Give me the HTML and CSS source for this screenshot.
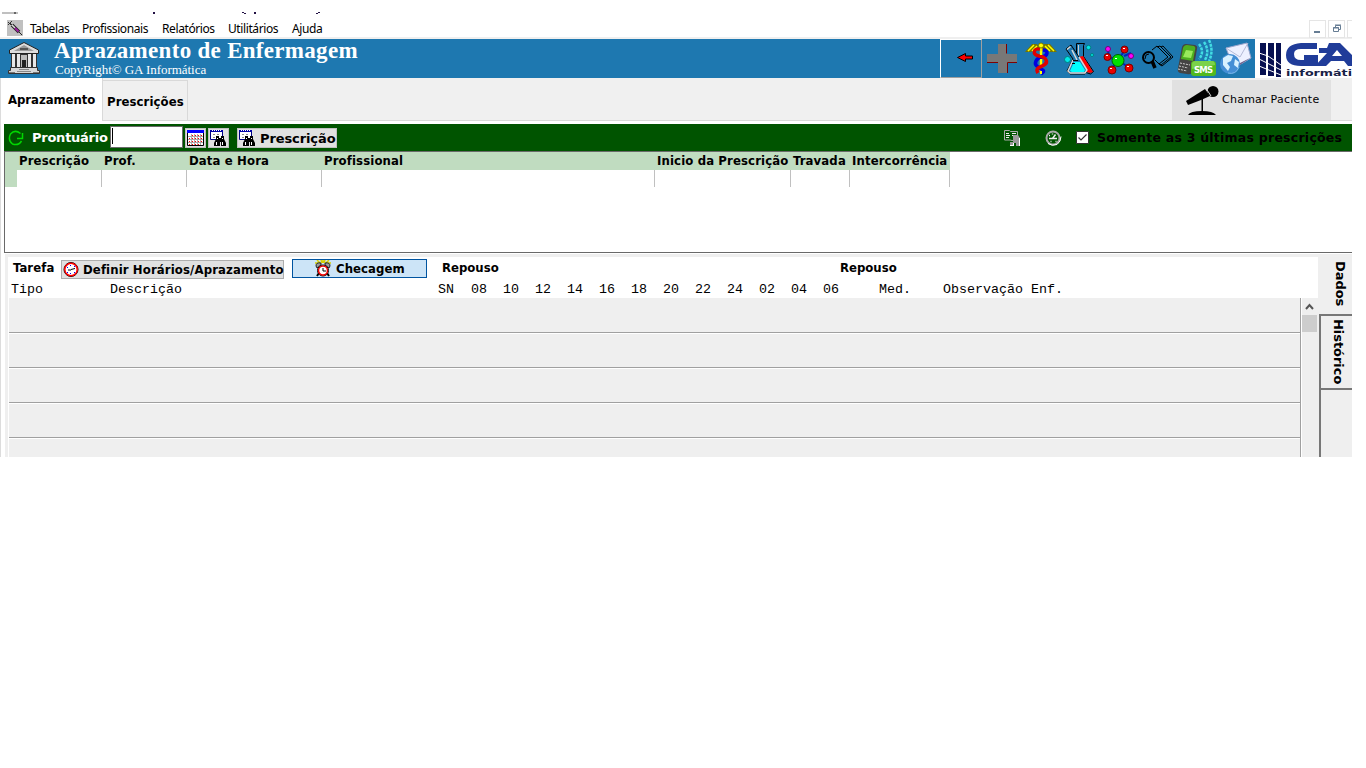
FILE: index.html
```html
<!DOCTYPE html>
<html lang="pt-BR">
<head>
<meta charset="utf-8">
<title>Aprazamento de Enfermagem</title>
<link rel="stylesheet" href="styles.css">
</head>
<body>
<svg class="defs" aria-hidden="true">
  <symbol id="finder" viewBox="0 0 16 16">
    <path d="M.5.5h12v9H.5z" fill="#fff" stroke="#000080"/><path d="M0 0h13v2H0z" fill="#0000a8"/>
    <path d="M2.500 0v1M4.500 0v1M6.500 0v1M8.500 0v1M10.500 0v1" stroke="#fff"/>
    <path d="M3 4h2v1H3zM7 4h2v1H7zM3 7h2v1H3z" fill="#888"/>
    <path d="M6 6h3v2h2V6h3v3l2 4v3h-5v-4h-1v4H4v-3l2-4z" fill="#000"/>
    <path d="M6.500 12v3M12.500 12v3M7.500 8v1M12.500 8v1" stroke="#fff"/>
  </symbol>
</svg>
<div class="window">
  <div class="caption-edge">
    <svg width="340" height="3" viewBox="0 0 340 3"><path d="M2 0h16v2H2z" fill="#c0c0c0"/><path d="M14 0h2v2h-2z" fill="#666"/><path d="M153 0h2v2h-2zM242 0h2v1h-2zM244 1h2v1h-2zM254 0h2v2h-2zM318 0h2v1h-2zM316 1h2v1h-2z" fill="#214"/></svg>
  </div>
  <nav class="menu">
    <svg class="app-icon" width="16" height="16" viewBox="0 0 16 16"><path d="M0 0h16v16H0z" fill="#c0c0c0"/><path d="M1 2l3 3M1 5l4-4M3 3l3 3" stroke="#333"/><path d="M5 5l7 7" stroke="#222" stroke-width="3.500"/><path d="M5 5l3 3" stroke="#ddd" stroke-width="1.500"/><path d="M8 8l3.500 3.500" stroke="#a020a0" stroke-width="2"/><path d="M12 12l3 3" stroke="#222"/></svg>
    <span class="m1">Tabelas</span><span class="m2">Profissionais</span><span class="m3">Relatórios</span><span class="m4">Utilitários</span><span class="m5">Ajuda</span>
    <div class="win-buttons">
      <i><svg width="17" height="17" viewBox="0 0 17 17"><path d="M5 11h6v2H5z" fill="#667d94"/></svg></i>
      <i><svg width="17" height="17" viewBox="0 0 17 17"><path d="M5.500 7.500h5v4h-5zM7.500 7V5.500h5v4H11M5 8h6M7 5h6" fill="none" stroke="#667d94"/></svg></i>
      <i class="cut"></i>
    </div>
  </nav>
  <header class="banner">
    <svg class="building" width="34" height="34" viewBox="0 0 34 34">
      <path d="M17 1.500L31.500 9v3.500h-29V9z" fill="#ddd" stroke="#222"/><path d="M17 4l10 6H7z" fill="#999"/><path d="M13 7h8v2h-8z" fill="#555"/>
      <path d="M4 13h26v13H4z" fill="#333"/><path d="M6.500 13v13M11.500 13v13M22.500 13v13M27.500 13v13" stroke="#e8e8e8" stroke-width="3"/><path d="M14 14h6v12h-6z" fill="#bbb"/><path d="M15 19h4v7h-4z" fill="#222"/>
      <path d="M3.500 26.500h27v3h2v3h-31v-3h2z" fill="#d8d8d8" stroke="#333"/><path d="M12 28.500h10M10 30.500h14" stroke="#888"/><path d="M2 31h6v1H2zM26 31h6v1h-6z" fill="#777"/>
    </svg>
    <div class="titles"><h1>Aprazamento de Enfermagem</h1><p>CopyRight© GA Informática</p></div>
    <div class="tools">
      <div class="back"><svg width="40" height="37" viewBox="0 0 40 37"><path d="M16.500 17.500l8-4v2.500h7v3h-7v2.500z" fill="#f00" stroke="#000"/></svg></div>
      <svg class="strip" width="274" height="39" viewBox="982 39 274 39">
        <path d="M998 44h9v10h10v9h-10v10h-9V63h-11v-9h11z" fill="#787878"/>
        <path d="M1006.500 44v9.500M987 62.500h11M1007.500 73V62.500h9.500" fill="none" stroke="#800000"/>
        <g fill="none">
          <path d="M1025 52l7-8h5l2 3v4l-4-2-4 3zM1057 52l-7-8h-6l-2 3v4l4-2 4 3z" fill="#777700"/>
          <path d="M1028 51l6-6M1032 51l5-5M1054 51l-6-6M1050 51l-5-5" stroke="#ff0" stroke-width="1.500"/>
          <path d="M1041 47v26" stroke="#f2e700" stroke-width="2.500"/>
          <path d="M1043 50c6 0 5 6-1 7s-9 7-4 10 8 4 3 7" stroke="#0000e0" stroke-width="3.500"/>
          <path d="M1040 49c-7-1-8 6-1 7s10 6 5 9-9 3-6 8" stroke="#e00000" stroke-width="3.500"/>
          <path d="M1041 51v4m0 4v5m0 7v3" stroke="#ff0" stroke-width="2"/>
          <circle cx="1041" cy="45.500" r="2.500" fill="#ff0" stroke="#777700"/>
        </g>
        <g>
          <path d="M1076.500 43.500h8l-1 2v11l10 15-3 2.500-6-2-8-15v-11z" fill="#1e78b0" stroke="#000"/><path d="M1078 57l5-1 10 16-3 1-3-1z" fill="#f00"/><path d="M1078.500 45v11" stroke="#ccc"/>
          <path d="M1066 49l5-4 8 12 8 13-2 4h-15l-3-3 6-12z" fill="#1e78b0" stroke="#000"/><path d="M1067 49.500l3.500-3M1072 50l5 10M1073 60l-5 11 2 2h15l2-3-8-13" fill="none" stroke="#d8d8d8" stroke-width="1.500"/><path d="M1074 62h6l5 8-1 2h-12l-2-1z" fill="#0ff"/><path d="M1073 60.500h5m-6 3h3" stroke="#000"/>
          <g fill="#00e8e8" stroke="#008080"><circle cx="1067.500" cy="59.500" r="3"/><circle cx="1088.500" cy="47.500" r="2.200"/><circle cx="1092" cy="55" r="1.500"/></g>
        </g>
        <g>
          <path d="M1108 57l10 3 7-10m-9 10l-4 10m6-10l10 7m-4-11l7-3m-23-3l1 8" fill="none" stroke="#0020c0" stroke-width="2"/>
          <g stroke="#700" fill="#e80000"><circle cx="1107.500" cy="57" r="3.500"/><circle cx="1124.500" cy="49.500" r="3.500"/><circle cx="1112" cy="70" r="4"/><circle cx="1129" cy="68" r="4"/></g><circle cx="1118" cy="60.500" r="6" fill="#00e000" stroke="#006000"/><g stroke="#707" fill="#f0f"><circle cx="1108" cy="49" r="2.500"/><circle cx="1131" cy="56" r="2.500"/></g>
          <path d="M1106 55h2v1h-2zM1123 48h2v1h-2zM1110 68h2v1h-2zM1127 66h2v1h-2zM1115 58h2v1h-2z" fill="#fff"/>
        </g>
        <g fill="none" stroke="#000"><circle cx="1148.500" cy="57.500" r="5.500" stroke-width="2"/><path d="M1152 61l3 7" stroke-width="3.500"/><path d="M1145 59l1-4 3-1" /><path d="M1152 50l5-4 11 11-9 7-4-4M1157 47l3-1 11 11-10 8-3-2M1161 47l2-1 10 11-11 9-3-2"/></g>
        <g>
          <path d="M1186 44l9 1q3 1 2 4l-4 22q-1 4-6 3l-7-1q-3-1-2-5l4-21q1-3 4-3z" fill="#444"/><path d="M1187 45l7 1q2 1 1 4l-2 11-12-2 2-11q1-3 4-3z" fill="#4eaf20"/><path d="M1186 50l7 1-2 7-8-1z" fill="#99ea5c"/><path d="M1180 63l10 2m-11 1l9 2m-10 1l9 2" stroke="#ccc" stroke-dasharray="2 1"/>
          <path d="M1199 44q6 8 0 15M1204 42q6 9 1 18M1209 40q5 11 0 21" fill="none" stroke="#42dce3" stroke-width="2.500" stroke-dasharray="3 1"/>
          <rect x="1191" y="61" width="25" height="15" rx="3" fill="#51b91e"/><path d="M1192 64q0-3 4-3h16q3 0 3 4l-23 4z" fill="#7bd24a"/><text x="1194" y="73" class="sms" textLength="19">SMS</text>
        </g>
        <g><path d="M1226 48l21-5 4 15-17 10z" fill="#edf0ff" stroke="#9ba5cc"/><path d="M1226 48l14 9 8-14" fill="none" stroke="#b4bad6"/><path d="M1238 64l12-6-13 9z" fill="#6d638e"/><circle cx="1230" cy="64" r="10" fill="#448ed5"/><path d="M1223 58l5-3 5 1-2 5-4 2 3 4-2 4-5-6zM1235 59l4 3-1 6-4-3z" fill="#d7f1ff"/><path d="M1228 73q8 2 11-6" stroke="#7db9ec" fill="none"/></g>
      </svg>
      <svg class="logo" width="97" height="39" viewBox="0 0 97 39"><path fill="#fff" d="M0 0h97v39H0z"/><path fill="#071050" d="M5 4h6v32H5zM13 4h6v33h-6zM21 4h5v34h-5z"/><path d="M4 14l9 3 13 9M4 20l22 11M4 27l22 9" stroke="#fff" fill="none"/><path d="M62 4v6H46q-7 0-7 5 0 6 7 6h3v-5h14v11H46q-15 0-15-11T46 4z" fill="#203c99"/><path d="M74 4h11l12 12v11h-4l-4-5H76l-5 5H60l12-13h-8V9h8zM82 11l-5 6h10z" fill="#203c99" fill-rule="evenodd"/><text x="31" y="37" class="logo-text" textLength="66" lengthAdjust="spacingAndGlyphs">informáti</text></svg>
    </div>
  </header>
  <div class="tabs">
    <div class="tab active"><b>Aprazamento</b></div><div class="tab"><b>Prescrições</b></div>
    <div class="call"><svg width="34" height="32" viewBox="0 0 34 32"><circle cx="28" cy="7.500" r="5.500"/><path d="M20 5l5 7-9 4-13 5-2-4z"/><path d="M16.500 14h1.500v14h-1.500z"/><path d="M3 31q2-4 14-4 11 0 14 4z"/><path d="M21.500 5l4.500 7" stroke="#ddd"/></svg><span>Chamar Paciente</span></div>
  </div>
  <div class="search">
    <svg class="refresh" width="16" height="17" viewBox="0 0 16 17"><path d="M12.500 3.500Q7-1 2.500 4q-3 6 2 10 6 2 9-3M9 8.500h5.500V3" fill="none" stroke="#00d800" stroke-width="1.500"/></svg>
    <b class="lbl">Prontuário</b><div class="field"><i></i></div>
    <div class="btn cal"><svg width="17" height="17" viewBox="0 0 17 17"><path fill="#fff" stroke="#000" d="M.500.500h16v15H.500z"/><path fill="#00f" d="M0 0h17v3H0z"/><path d="M1 6.500h15M1 9.500h15M1 12.500h15M4.500 4v11M7.500 4v11M10.500 4v11M13.500 4v11" stroke="#aaa"/><path d="M5 5.500h10M2 8.500h13M2 11.500h13M2 14.500h10" stroke="#f00" stroke-dasharray="1 2"/></svg></div>
    <div class="btn find"><svg width="16" height="16"><use href="#finder"/></svg></div>
    <div class="btn presc"><svg width="16" height="16"><use href="#finder"/></svg><b>Prescrição</b></div>
    <svg class="copy" width="17" height="17" viewBox="0 0 17 17"><path d="M.500.500h5l1 1h7v9H8L6 10H.500z" fill="#005400" stroke="#aaa"/><path d="M2 3.500h3M2 5.500h4M2 7.500h3M8 3.500h4M8 5.500h2" stroke="#eee"/><path d="M9 5h5l2 3v8h-4v-3h-2v3H6v-4h3z" fill="#999"/><path d="M15.500 8v8M9.500 13v3M6 15.500h4" stroke="#fff"/></svg>
    <svg class="clock" width="17" height="17" viewBox="0 0 17 17"><circle cx="8" cy="8" r="6.500" fill="none" stroke="#aaa" stroke-width="2"/><path d="M3 13.500q4 3 9 1 4-3 4-8" fill="none" stroke="#fff"/><path d="M4 8.500h8M7.500 8.500l3-4M4 5.500h1M5.500 11.500h1M10.500 11.500h1M7.500 3.500v1" stroke="#eee" stroke-width="1.500"/></svg>
    <svg class="check" width="13" height="13" viewBox="0 0 13 13"><path fill="#fff" stroke="#333" d="M.500.500h12v12H.500z"/><path d="M2.500 6.500l2.500 2.500L10.500 3.500" fill="none" stroke="#333" stroke-width="1.200"/></svg>
    <b class="recent">Somente as 3 últimas prescrições</b>
  </div>
  <section class="grid">
    <div class="grid-row head"><i></i><b>Prescrição</b><b>Prof.</b><b>Data e Hora</b><b>Profissional</b><b>Inicio da Prescrição</b><b>Travada</b><b>Intercorrência</b></div>
    <div class="grid-row body"><i></i><span></span><span></span><span></span><span></span><span></span><span></span><span></span></div>
  </section>
  <section class="lower">
    <div class="tasks">
      <div class="task-bar"><b class="tarefa">Tarefa</b>
        <div class="define"><svg width="17" height="17" viewBox="0 0 17 17"><circle cx="8" cy="8.500" r="7" fill="#fff" stroke="#000"/><circle cx="8" cy="8.500" r="6.200" fill="none" stroke="#f00" stroke-width="1.500"/><path d="M8 8.500l4-1M5 9h3" stroke="#000"/><path d="M7.500 4v1M4 6.500h1M4 11.500h1M7.500 12v1M11 11.500h1M11 5.500h1" stroke="#00f"/></svg><b>Definir Horários/Aprazamento</b></div>
        <div class="checking"><svg width="17" height="17" viewBox="0 0 17 17"><path d="M2 0l3 3M6 0l1 3M10 0L9 3M14 0l-3 3M8 0v3M0 3h3M13 3h3" stroke="#d8d000" stroke-width="1.500"/><path d="M1 6q0-4 5-3v2L2 8zM15 6q0-4-5-3v2l4 3z" fill="#999" stroke="#000" stroke-width=".8"/><path d="M4 13l-2 3M12 13l2 3" stroke="#000" stroke-width="2"/><circle cx="8" cy="10.500" r="5.500" fill="#fff" stroke="#000"/><circle cx="8" cy="10.500" r="4.500" fill="#fff" stroke="#e00" stroke-width="1.500"/><path d="M8 8v3h3" stroke="#000" fill="none"/></svg><b>Checagem</b></div>
        <b class="rep1">Repouso</b><b class="rep2">Repouso</b>
      </div>
      <div class="cols"><span class="c-type">Tipo</span><span class="c-desc">Descrição</span><span class="c-sn">SN</span><span>08</span><span>10</span><span>12</span><span>14</span><span>16</span><span>18</span><span>20</span><span>22</span><span>24</span><span>02</span><span>04</span><span>06</span><span class="c-med">Med.</span><span class="c-obs">Observação Enf.</span></div>
      <div class="list"><div class="rows"><p></p><p></p><p></p><p></p><p></p></div><div class="scroll"><svg width="15" height="17" viewBox="0 0 15 17"><path d="M4 11l3.500-4 3.500 4" fill="none" stroke="#555" stroke-width="2"/></svg><i></i></div></div>
    </div>
    <aside><div class="side dados"><b>Dados</b></div><div class="side hist"><b>Histórico</b></div><div class="side rest"></div></aside>
  </section>
</div>
</body>
</html>
```
FILE: styles.css
```css
* { box-sizing: border-box; }
body { margin: 0; background: #fff; color: #000; font: 12px "Noto Sans", sans-serif; overflow: hidden; }
svg { display: block; flex: none; }
.defs { width: 0; height: 0; position: absolute; }
b { font: bold 13px/16px "DejaVu Sans Condensed", "DejaVu Sans", sans-serif; letter-spacing: .08px; white-space: nowrap; }
.window { width: 1352px; height: 457px; overflow: hidden; background: linear-gradient(#dcdcdc, #dcdcdc) 0 78px / 1px 379px no-repeat; }
.caption-edge { height: 20px; padding-top: 12px; }
.menu { height: 17px; display: flex; line-height: 17px; letter-spacing: -.4px; white-space: nowrap; }
.menu span { flex: none; }
.app-icon { margin: 0 7px; }
.m1 { width: 52px; } .m2 { width: 80px; } .m3 { width: 66px; } .m4 { width: 64px; }
.win-buttons { display: flex; margin-left: auto; gap: 2px; }
.win-buttons i { width: 17px; height: 18px; border: 1px solid #e5e5e5; }
.win-buttons .cut { width: 5px; border-right: 0; }
.win-buttons svg { margin: -1px; }
.banner { height: 41px; border-top: 2px solid #efefef; background: #1e78b0; display: flex; color: #fff; }
.building { margin: 2px 13px 0 7px; }
.titles { white-space: nowrap; font-family: "Liberation Serif", serif; }
h1 { margin: 0; font-size: 23px; line-height: 24px; letter-spacing: .3px; }
.titles p { margin: 0; font-size: 13px; line-height: 13px; padding-left: 1px; letter-spacing: -.04px; }
.tools { display: flex; margin-left: auto; }
.back { width: 42px; height: 39px; border: 1px solid #fff; border-right-color: #a0a0a0; border-bottom-color: #a0a0a0; }
.strip { margin-right: -1px; }
.sms { font: bold 8.500px "DejaVu Sans", sans-serif; fill: #fff; }
.logo-text { font: bold 9.500px "DejaVu Sans", sans-serif; fill: #182146; }
.tabs { height: 46px; display: flex; border-left: 1px solid #dcdcdc; background: linear-gradient(#f0f0f0 42px, #d9d9d9 42px, #d9d9d9 43px, #fff 43px); }
.tab { width: 85px; height: 41px; margin-top: 2px; padding: 12px 0 0 4px; border: 1px solid #d9d9d9; border-left: 0; }
.tab.active { width: 102px; height: 46px; margin-top: 0; padding: 13px 0 0 7px; border-width: 0 1px 0 0; border-image: linear-gradient(#d9d9d9 42px, #fff 42px) 1; background: #fff; }
.tab.active b { letter-spacing: -.05px; }
.call { margin: 2px 21px 0 auto; width: 159px; height: 40px; background: #e1e1e1; display: flex; padding: 4px 0 0 13px; font: 11px/31px "DejaVu Sans", sans-serif; letter-spacing: .25px; white-space: nowrap; }
.call span { margin-left: 3px; }
.search { height: 27px; margin-left: 4px; background: #005400; display: flex; align-items: flex-start; }
.refresh { margin: 6px 0 0 4px; }
.lbl { width: 78px; margin: 6px 0 0 8px; color: #fff; font-family: "DejaVu Sans"; letter-spacing: -.25px; }
.field { width: 73px; height: 22px; margin-top: 2px; background: #fff; border: 1px solid #696969; padding: 1px; }
.field i { display: block; width: 1px; height: 16px; background: #000; }
.btn { height: 20px; margin-top: 4px; border: 1px solid #c0c0c0; background: #e1e1e1; display: flex; padding: 1px; }
.cal { width: 21px; margin-left: 2px; } .find { width: 21px; margin-left: 2px; } .presc { width: 100px; margin-left: 8px; }
.presc b { margin-left: 5px; line-height: 18px; font-family: "DejaVu Sans"; letter-spacing: -.1px; }
.copy { margin: 6px 0 0 667px; } .clock { margin: 6px 0 0 24px; } .check { margin: 7px 0 0 14px; }
.recent { margin: 6px 0 0 8px; font-size: 12.500px; font-family: "DejaVu Sans"; letter-spacing: .24px; }
.grid { height: 102px; margin-left: 4px; border: 1px solid #696969; border-right: 0; }
.grid-row { display: grid; width: 945px; grid-template-columns: 12px 85px 85px 135px 333px 136px 59px 100px; }
.head { height: 18px; background: #c0dcc0; }
.head b { padding: 1px 0 0 2px; letter-spacing: .13px; }
.body { height: 17px; }
.body i { background: #c0dcc0; } .body span { border-right: 1px solid #c0c0c0; }
.lower { height: 204px; margin: 1px 0 0 5px; border: 3px solid #efefef; border-width: 3px 0 0 3px; display: flex; }
.tasks { width: 1310px; }
.task-bar { height: 22px; display: flex; }
.tarefa { width: 48px; margin: 3px 0 0 5px; }
.define { width: 223px; height: 19px; margin-top: 3px; border: 1px solid #adadad; background: #e1e1e1; display: flex; padding-left: 1px; }
.define b { margin-left: 3px; line-height: 18px; letter-spacing: .12px; }
.checking { width: 135px; height: 19px; margin: 2px 0 0 8px; border: 1px solid #0054a0; background: #cce4f7; display: flex; padding-left: 22px; }
.checking b { margin-left: 4px; line-height: 18px; }
.rep1 { width: 398px; margin: 3px 0 0 15px; letter-spacing: 0; } .rep2 { margin-top: 3px; letter-spacing: 0; }
.cols { display: flex; height: 19px; padding-left: 3px; font: 13.330px/22px "Liberation Mono", monospace; white-space: nowrap; }
.cols span { width: 32px; flex: none; }
.cols .c-type { width: 99px; } .cols .c-desc { width: 328px; } .cols .c-sn { width: 33px; }
.cols .c-med { width: 64px; margin-left: 24px; }
.list { height: 160px; display: flex; background: #efefef; }
.rows { width: 1293px; border-right: 1px solid #a0a0a0; border-left: 1px solid #fff; }
.rows p { margin: 0; height: 35px; border-bottom: 1px solid #a0a0a0; border-top: 1px solid #fff; }
.rows p:first-child { border-top: 0; }
.scroll { border-left: 1px solid #fff; width: 17px; }
.scroll i { display: block; width: 15px; height: 17px; background: #cdcdcd; }
aside { width: 34px; background: #efefef; }
.side { width: 33px; margin-left: 1px; writing-mode: vertical-rl; padding-right: 3px; }
.side b { font-family: "DejaVu Sans"; line-height: 18px; letter-spacing: -.05px; }
.dados { height: 57px; padding-top: 4px; }
.hist { height: 76px; border: 2px solid #777; border-width: 2px 0 2px 2px; padding: 3px 5px 0 0; }
.rest { height: 70px; border-left: 2px solid #777; }
```
